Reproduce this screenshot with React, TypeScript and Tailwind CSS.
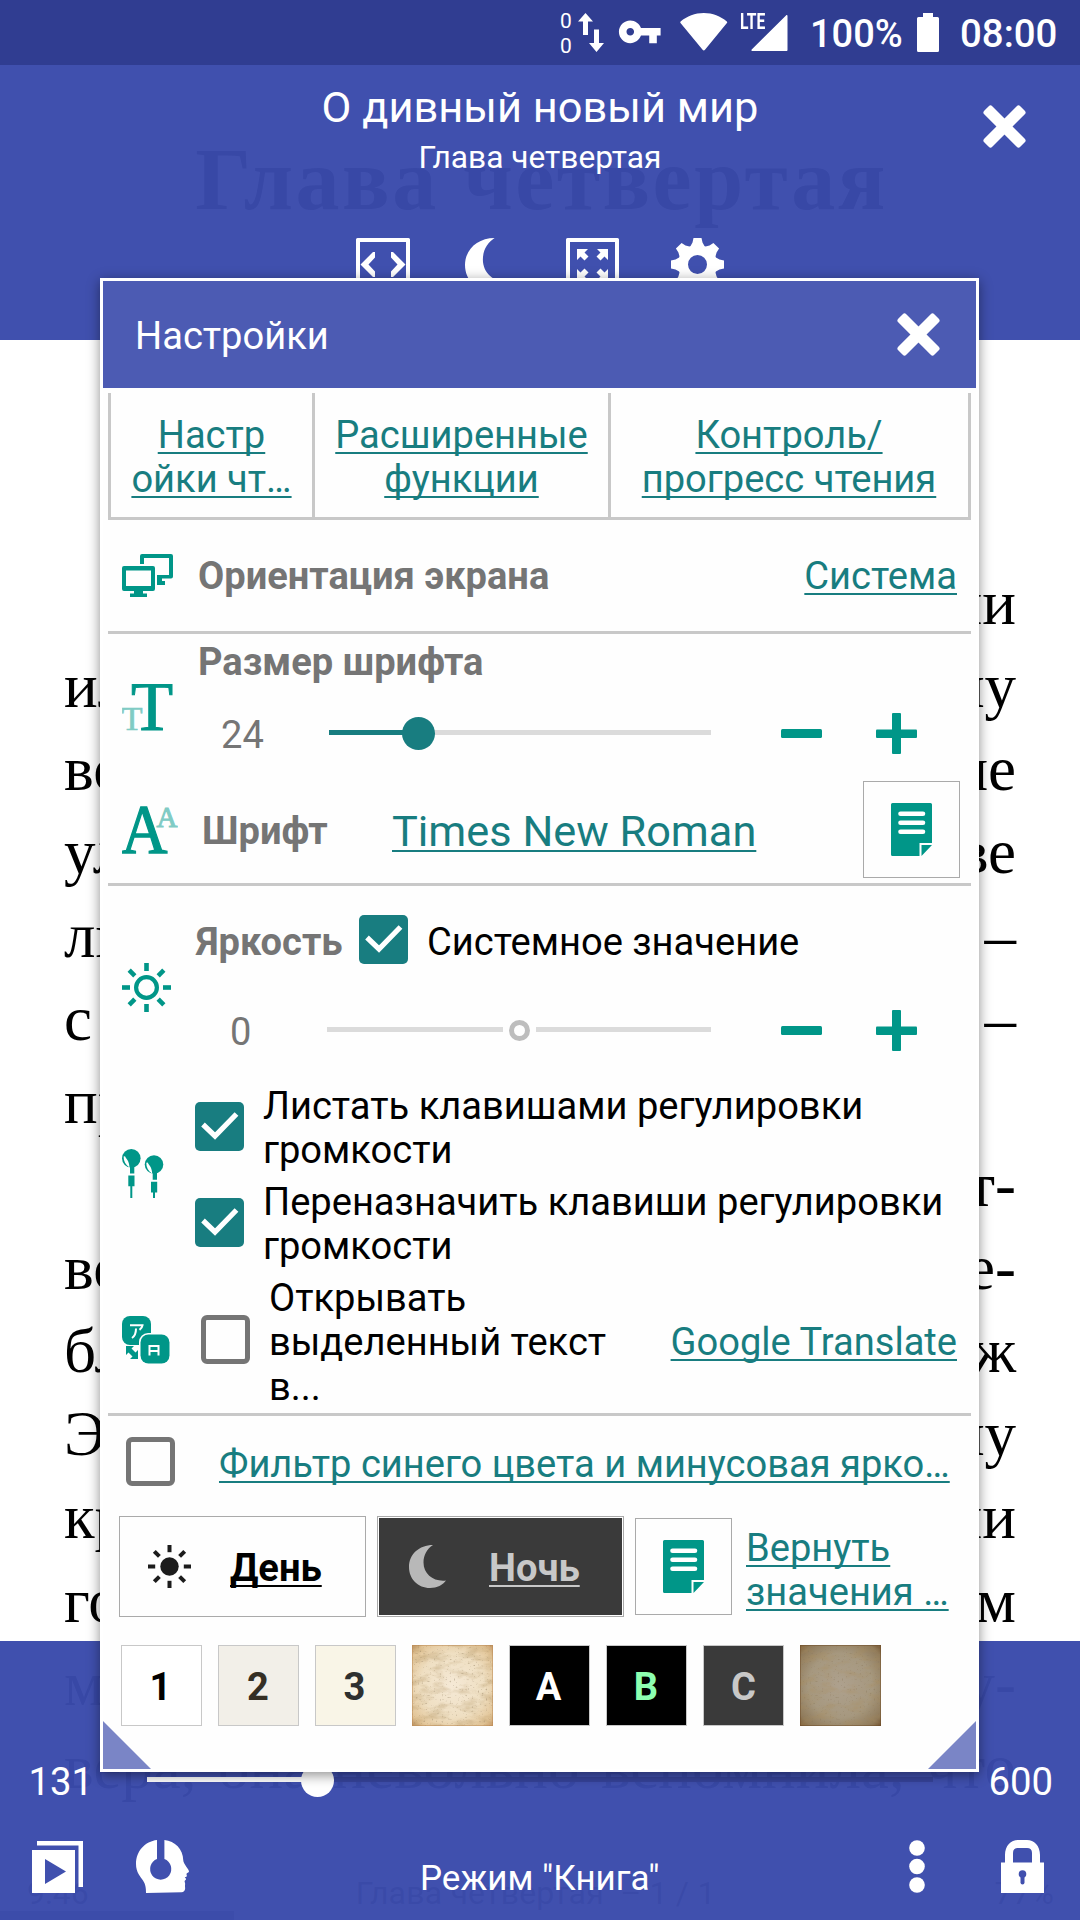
import React from "react";

const TEAL = "#009688";

function CloseIcon() {
  return (
    <svg width="43" height="43" viewBox="0 0 43 43" fill="#fff" className="shrink-0">
      <rect x="-4" y="15.8" width="51" height="11.4" rx="2.5" transform="rotate(45 21.5 21.5)" />
      <rect x="-4" y="15.8" width="51" height="11.4" rx="2.5" transform="rotate(-45 21.5 21.5)" />
    </svg>
  );
}

function MoonIcon({ size, color }: { size: number; color: string }) {
  return (
    <svg width={size} height={size} viewBox="0 0 43 43" fill={color} className="shrink-0">
      <path d="M24 0C10 0 0 9.500 0 22c0 12 9 21 21 21 7 0 13-3 16-7.500C25 37 14.500 29.500 14.500 17.500 14.500 10 18 4 24 0z" />
    </svg>
  );
}

function CodeIcon() {
  return (
    <svg width="54" height="53" viewBox="0 0 54 53" fill="#fff">
      <path fillRule="evenodd" d="M1.500 0h51a1.500 1.500 0 0 1 1.500 1.500V53H0V1.500A1.500 1.500 0 0 1 1.500 0zM4 4v45h46V4z" />
      <path d="M4.500 26.500 17 14h2v5.500l-6.500 7L19 33.500V39h-2zM49.500 26.500 37 14h-2v5.500l6.500 7-6.500 7V39h2z" />
    </svg>
  );
}

function FullscreenIcon() {
  const arrow = "M11 11h11l-3.500 3.500 4 4-4 4-4-4L11 22z";
  return (
    <svg width="53" height="53" viewBox="0 0 53 53" fill="#fff">
      <path fillRule="evenodd" d="M1.500 0h50A1.500 1.500 0 0 1 53 1.500V53H0V1.500A1.500 1.500 0 0 1 1.500 0zM4 4v45h45V4z" />
      {[0, 90, 180, 270].map((a) => (
        <path key={a} d={arrow} transform={`rotate(${a} 26.500 26.500)`} />
      ))}
    </svg>
  );
}

function GearIcon() {
  return (
    <svg width="53" height="53" viewBox="-26.500 -26.500 53 53" fill="#fff">
      <path fillRule="evenodd" d="M-19.500 0a19.500 19.500 0 1 0 39 0 19.500 19.500 0 1 0-39 0zM-9.500 0a9.500 9.500 0 1 0 19 0 9.500 9.500 0 1 0-19 0z" />
      {[0, 45, 90, 135, 180, 225, 270, 315].map((a) => (
        <path key={a} d="M-7.500-17.500-5-22l1-4.500h8L5-22l2.500 4.500z" transform={`rotate(${a})`} />
      ))}
    </svg>
  );
}

function MonitorsIcon() {
  return (
    <svg width="51" height="43" viewBox="0 0 51 43" fill={TEAL}>
      <path d="M18 10V2a2 2 0 0 1 2-2h29a2 2 0 0 1 2 2v20.500a2 2 0 0 1-2 2h-9V27h3v4h-8V21h12V4H22v6z" />
      <path fillRule="evenodd" d="M2 12h29a2 2 0 0 1 2 2v21a2 2 0 0 1-2 2H21v2.500h4V43H8v-3.500h4V37H2a2 2 0 0 1-2-2V14a2 2 0 0 1 2-2zM4 16.500v15.500h25V16.500z" />
    </svg>
  );
}

function FontSizeIcon() {
  return (
    <svg width="52" height="47" viewBox="0 0 52 47" fontFamily="Liberation Serif, serif">
      <text x="9" y="45.500" fontSize="69" fill={TEAL} stroke={TEAL} strokeWidth="1">T</text>
      <text x="-0.500" y="45.500" fontSize="34.500" fill="#80cbc4" stroke="#80cbc4" strokeWidth="0.600">T</text>
    </svg>
  );
}

function FontFaceIcon() {
  return (
    <svg width="56" height="48" viewBox="0 0 56 48" fontFamily="Liberation Serif, serif">
      <text x="-1" y="47" fontSize="69" fill={TEAL} stroke={TEAL} strokeWidth="1.300" textLength="46.500" lengthAdjust="spacingAndGlyphs">A</text>
      <text x="34.500" y="20.500" fontSize="29" fill="#80cbc4" stroke="#80cbc4" strokeWidth="1">A</text>
    </svg>
  );
}

const RAYS = [0, 45, 90, 135, 180, 225, 270, 315];

function BrightnessIcon() {
  return (
    <svg width="49" height="49" viewBox="-24.500 -24.500 49 49">
      <circle r="10.400" fill="none" stroke={TEAL} strokeWidth="4.200" />
      {RAYS.map((a) => (
        <rect key={a} x="-2.300" y="-24.500" width="4.600" height="8" fill={TEAL} transform={`rotate(${a})`} />
      ))}
    </svg>
  );
}

function DayIcon() {
  return (
    <svg width="43" height="43" viewBox="-21.500 -21.500 43 43" fill="#1c1c1c">
      <circle r="9.200" />
      {RAYS.map((a) => (
        <rect key={a} x="-2" y="-21.500" width="4" height="7.200" transform={`rotate(${a})`} />
      ))}
    </svg>
  );
}

function EarbudsIcon() {
  const bud = (
    <>
      <circle cx="9.300" cy="9.300" r="9.300" fill={TEAL} />
      <path d="M1.600 7.500 3 7.200c1.200 3 4.200 4 4.500 11.300C3.500 16 1.500 12 1.600 7.500z" fill="#fff" />
      <path d="M8 15h4.300v9.500H8zM6.300 26.500h6.200v10.800h-6.200zM8.300 37h2v12h-2z" fill={TEAL} />
    </>
  );
  return (
    <svg width="42" height="49" viewBox="0 0 42 49">
      {bud}
      <g transform="translate(22.700 6.200)">{bud}</g>
    </svg>
  );
}

function TranslateIcon() {
  return (
    <svg width="48" height="48" viewBox="0 0 48 48" fill="none">
      <rect width="29" height="29" rx="8" fill={TEAL} />
      <path d="M8 9.300h12.500c-.3 2-1.500 3.500-3 4.500M14 12.500c0 5-1 7.500-4 9.500" stroke="#fff" strokeWidth="2" />
      <rect x="17" y="17" width="33" height="33" rx="9" fill="#fefefe" />
      <rect x="18.500" y="18.500" width="29" height="29" rx="8" fill={TEAL} />
      <path d="M27.500 39.500V30h9v9.500M27.500 35h9" stroke="#fff" strokeWidth="2" />
      <path d="M4 30h8l-2.500 2.500 4 4 2.500-2.500v9H8l2.500-2.500-4-4L4 39z" fill={TEAL} />
    </svg>
  );
}

function DocIcon() {
  return (
    <svg width="41" height="53" viewBox="0 0 41 53" fill={TEAL}>
      <path d="M1.500 0h38A1.500 1.500 0 0 1 41 1.500V40H28.500v13h-27A1.500 1.500 0 0 1 0 51.500v-50A1.500 1.500 0 0 1 1.500 0zM30.500 42H41L30.500 53z" />
      <path d="M9.500 10.800h22.500M9.500 19.800h22.500M9.500 28.700h22.500" stroke="#fff" strokeWidth="4.600" strokeLinecap="round" />
    </svg>
  );
}

function MinusIcon() {
  return (
    <svg width="41" height="41" viewBox="0 0 41 41" fill={TEAL}>
      <rect y="16" width="41" height="9" rx="1.500" />
    </svg>
  );
}

function PlusIcon() {
  return (
    <svg width="41" height="41" viewBox="0 0 41 41" fill={TEAL}>
      <rect y="16.500" width="41" height="8.500" rx="1" />
      <rect x="16" width="9" height="41" rx="1" />
    </svg>
  );
}

function Checkbox({ checked }: { checked: boolean }) {
  if (!checked) return <div className="size-[49px] shrink-0 rounded-[6px] border-[5px] border-[#757575]" />;
  return (
    <div className="size-[49px] shrink-0 rounded-[5px] bg-[#187d80]">
      <svg width="49" height="49" viewBox="0 0 49 49" fill="none" stroke="#fff" strokeWidth="5.200">
        <path d="M8 22.500 20 34 41.500 12" />
      </svg>
    </div>
  );
}

function Link({ children, className = "" }: { children: React.ReactNode; className?: string }) {
  return (
    <span
      className={`whitespace-nowrap text-[#187d80] underline decoration-2 underline-offset-[4px] [text-decoration-skip-ink:none] ${className}`}
    >
      {children}
    </span>
  );
}

function Label({ children }: { children: React.ReactNode }) {
  return <span className="whitespace-nowrap font-bold text-[#757575]">{children}</span>;
}

function Divider() {
  return <div className="ml-[5px] h-[3px] w-[863px] shrink-0 bg-[#c8c8c8]" />;
}

function Parchment({ dark }: { dark?: boolean }) {
  const id = dark ? "dark" : "light";
  return (
    <svg width="81" height="81" viewBox="0 0 81 81" className="shrink-0">
      <defs>
        <radialGradient id={`g-${id}`} cx="50%" cy="50%" r="72%">
          <stop offset="0" stopColor={dark ? "#aea18e" : "#f5e9d6"} />
          <stop offset="0.550" stopColor={dark ? "#a6987f" : "#efdfc2"} />
          <stop offset="0.850" stopColor={dark ? "#8f7a5a" : "#e2c496"} />
          <stop offset="1" stopColor={dark ? "#6d4c28" : "#c2905c"} />
        </radialGradient>
        <filter id={`n-${id}`} x="0" y="0" width="100%" height="100%">
          <feTurbulence type="fractalNoise" baseFrequency="0.060 0.120" numOctaves="5" seed="11" />
          <feColorMatrix values="0 0 0 0 0.400  0 0 0 0 0.260  0 0 0 0 0.100  0.900 0 0 0 -0.400" />
        </filter>
        <filter id={`s-${id}`} x="0" y="0" width="100%" height="100%">
          <feTurbulence type="fractalNoise" baseFrequency="0.500" numOctaves="2" seed="4" />
          <feColorMatrix values="0 0 0 0 0.250  0 0 0 0 0.180  0 0 0 0 0.100  4 0 0 0 -2.600" />
        </filter>
      </defs>
      <rect width="81" height="81" fill={`url(#g-${id})`} />
      <rect width="81" height="81" filter={`url(#n-${id})`} />
      <rect width="81" height="81" filter={`url(#s-${id})`} opacity="0.600" />
      <rect x="0.500" y="0.500" width="80" height="80" fill="none" stroke={dark ? "#6d4c28" : "#b98752"} strokeOpacity="0.500" />
    </svg>
  );
}

const BOOK_LINES: [string, string][] = [
  ["", "ии"],
  ["ил", "му"],
  ["во", "ые"],
  ["ул", "зве"],
  ["ли", "–"],
  ["с", "–"],
  ["пр", ""],
  ["", "ст-"],
  ["во", "ле-"],
  ["бл", "уж"],
  ["Эт", "му"],
  ["кр", "ии"],
  ["го", "ем"],
  ["мо", "ту-"],
];

function BookPage() {
  return (
    <div className="absolute inset-0 flex flex-col bg-white text-black">
      <div className="mt-[137px] h-[83px] pl-[3px] text-center font-['Liberation_Serif',serif] text-[88px] font-bold leading-[86px] tracking-[2.500px]">
        Глава четвертая
      </div>
      <div className="mt-[342px] pr-[64px] pl-[64px] font-['Liberation_Serif',serif] text-[63px]">
        {BOOK_LINES.map(([l, r], i) => (
          <div key={i} className="flex h-[83.140px] justify-between leading-[83.140px]">
            <span>{l}</span>
            <span>{r}</span>
          </div>
        ))}
        <div className="flex h-[83.140px] justify-between leading-[83.140px]">
          {["вера,", "она", "невольно", "вспомнила,", "что"].map((w) => (
            <span key={w}>{w}</span>
          ))}
        </div>
      </div>
      <div className="mt-[66px] flex h-[36px] justify-between pr-[26px] pl-[27px] text-[32px] leading-[36px] text-[#444]">
        <span>9:46</span>
        <span className="mr-[12px] tracking-[0.200px]">Глава четвертая&nbsp; – 1 / 1</span>
        <span>77%</span>
      </div>
      <div className="mt-auto h-[10px] w-[234px] bg-[#888]" />
    </div>
  );
}

function StatusBar() {
  return (
    <div className="flex h-[65px] items-start bg-[#303d91] pl-[560px] text-[38px] font-medium text-white">
      <div className="w-[12px] pt-[9px] text-center text-[21px] font-normal leading-[25px]">
        <div>0</div>
        <div>0</div>
      </div>
      <svg className="mt-[13px] ml-[5px] shrink-0" width="28" height="40" viewBox="0 0 28 40" fill="#fff">
        <path d="M8.500 0 16 8.500h-5V22H6V8.500H1zM19.500 39 12 30h5V16.500h5V30h5z" />
      </svg>
      <svg className="mt-[9px] ml-[12px] shrink-0" width="45.500" height="45.500" viewBox="0 0 24 24" fill="#fff">
        <path d="M12.650 10C11.830 7.670 9.610 6 7 6c-3.310 0-6 2.690-6 6s2.690 6 6 6c2.610 0 4.830-1.670 5.650-4H17v4h4v-4h2v-4H12.650zM7 14c-1.100 0-2-.900-2-2s.900-2 2-2 2 .900 2 2-.900 2-2 2z" />
      </svg>
      <svg className="mt-[13px] ml-[17.500px] shrink-0" width="48" height="38" viewBox="0 0 48 38" fill="#fff">
        <path d="M.600 8.600C7 3 15 0 23.800 0s16.800 3 23 8.600c.6.500.5 1 .1 1.500L25 36.800c-.8.900-1.600.9-2.400 0L.500 10.100c-.4-.5-.4-1 .1-1.500z" />
      </svg>
      <div className="relative mt-[13px] ml-[12px] h-[40px] w-[48px] shrink-0">
        <svg width="48" height="40" viewBox="0 0 48 40" fill="#fff">
          <path d="M46 2.500c.8-.8 1.500-.5 1.500.6V37c0 .7-.5 1-1 1H12.500c-1.200 0-1.500-.8-.8-1.500z" />
        </svg>
        <span className="absolute top-0 left-0 origin-left scale-x-[0.710] text-[22px] font-bold leading-[18px]">LTE</span>
      </div>
      <span className="ml-[22px] w-[94px] leading-[68px]">100%</span>
      <svg className="mt-[13px] ml-[13px] shrink-0" width="22" height="39" viewBox="0 0 22 39" fill="#fff">
        <path d="M6 0h10v4h4.500A1.500 1.500 0 0 1 22 5.500v32a1.500 1.500 0 0 1-1.500 1.500h-19A1.500 1.500 0 0 1 0 37.500v-32A1.500 1.500 0 0 1 1.500 4H6z" />
      </svg>
      <span className="ml-[21px] text-[38.400px] leading-[68px]">08:00</span>
    </div>
  );
}

function ReaderHeader() {
  return (
    <div className="flex h-[275px] flex-col bg-[rgba(58,74,171,0.970)] text-white">
      <div className="flex h-[115px]">
        <div className="w-[140px]" />
        <div className="flex-1 pt-[18px] text-center">
          <div className="text-[43.400px] leading-[50px]">О дивный новый мир</div>
          <div className="mt-[6px] text-[31.700px] leading-[38px]">Глава четвертая</div>
        </div>
        <div className="w-[140px] pt-[40px] pl-[43px]">
          <CloseIcon />
        </div>
      </div>
      <div className="mt-[58px] flex h-[53px] pl-[355.500px]">
        <CodeIcon />
        <div className="ml-[55.500px]">
          <MoonIcon size={53} color="#fff" />
        </div>
        <div className="ml-[48px]">
          <FullscreenIcon />
        </div>
        <div className="ml-[52px]">
          <GearIcon />
        </div>
      </div>
    </div>
  );
}

function ReaderFooter() {
  return (
    <div className="mt-auto h-[279px] bg-[rgba(58,74,171,0.970)] pt-[115px] text-white">
      <div className="flex h-[46px] items-center text-[38.300px]">
        <span className="mt-[5px] w-[147px] pl-[28.500px] leading-[46px]">131</span>
        <div className="relative h-[5px] w-[786px] bg-[#36439a]">
          <div className="h-full w-[170px] bg-white" />
          <div className="absolute -top-[13px] left-[154px] size-[33px] rounded-full bg-white" />
        </div>
        <span className="mt-[5px] ml-[55.500px] leading-[46px]">600</span>
      </div>
      <div className="mt-[38px] flex h-[53px] pl-[32px]">
        <svg width="51" height="53" viewBox="0 0 51 53" fill="#fff" className="mt-[1px] shrink-0">
          <path d="M5 0h46v46h-4.500V4.500H5z" />
          <path fillRule="evenodd" d="M0 9h43v43H0zM13 18v25l21-12.500z" />
        </svg>
        <svg width="54" height="53" viewBox="0 0 54 53" fill="#fff" className="ml-[53px] shrink-0">
          <path d="M21 0v19.100a10.600 10.600 0 1 0 7.400 0V0C39 1 47 9 47.300 20.500c0 3 5.700 9 5.700 11 0 1.200-2.500 1.500-2.500 2.500 0 .9.600 1.600.3 2.300-.3.700-2 .7-2 1.200s1.500.8 1.300 1.700-1.500 1-1.500 2 .8 1.600.5 3.300.2 3 0 4.500c-.3 2-1.500 3-3.500 3.200L10 53c0-5.500-.5-8.500-3-12.500S0 32.500 0 24C0 11 9 1.500 21 0z" />
        </svg>
        <span className="mt-[16px] ml-[230px] w-[250px] shrink-0 text-[35px] leading-[46px] whitespace-nowrap">Режим "Книга"</span>
        <svg width="16" height="53" viewBox="0 0 16 53" fill="#fff" className="ml-[239px] shrink-0">
          <circle cx="8" cy="8" r="7.800" />
          <circle cx="8" cy="26.500" r="7.800" />
          <circle cx="8" cy="45" r="7.800" />
        </svg>
        <svg width="43" height="53" viewBox="0 0 43 53" className="ml-[76px] shrink-0">
          <path fill="#fff" fillRule="evenodd" d="M4 22.500V15C4 5.500 10 0 17 0h9c7 0 13 5.500 13 15v7.500h4V53H0V22.500zM12 22.500h19V13c0-3.300-1.700-5-5-5h-9c-3.300 0-5 1.700-5 5z" />
          <circle cx="21.500" cy="34" r="3.800" fill="#404fae" />
          <path d="M21.500 34v8.500" stroke="#404fae" strokeWidth="4" strokeLinecap="round" />
        </svg>
      </div>
    </div>
  );
}

function Tabs() {
  const cell = "border-[#c8c8c8] pt-[20px] text-center leading-[44.300px]";
  return (
    <div className="mt-[5px] ml-[5px] flex h-[127px] w-[863px] shrink-0 border-b-[3px] border-[#c8c8c8]">
      <div className={`${cell} w-[204px] border-l-[3px]`}>
        <Link>Настр</Link>
        <br />
        <Link>ойки чт…</Link>
      </div>
      <div className={`${cell} w-[296px] border-l-[3px]`}>
        <Link>Расширенные</Link>
        <br />
        <Link>функции</Link>
      </div>
      <div className={`${cell} w-[363px] border-x-[3px] pr-[1px]`}>
        <Link>Контроль/</Link>
        <br />
        <Link>прогресс чтения</Link>
      </div>
    </div>
  );
}

function IconCell({ children }: { children: React.ReactNode }) {
  return <div className="flex w-[93px] shrink-0 items-center pl-[19px]">{children}</div>;
}

function SettingsDialog() {
  return (
    <div className="absolute top-[278px] left-[100px] flex h-[1494px] w-[879px] flex-col border-[3px] border-white bg-[#fefefe] text-[38.100px] leading-[44.300px] text-black shadow-[0_3px_12px_rgba(0,0,0,0.450)]">
      <div className="flex h-[107px] shrink-0 items-center justify-between bg-[#4c5bb3] pr-[36px] pl-[32px] text-white">
        <span className="mt-[4px]">Настройки</span>
        <CloseIcon />
      </div>
      <Tabs />

      <div className="flex h-[111px] shrink-0 items-center pr-[19px]">
        <IconCell>
          <MonitorsIcon />
        </IconCell>
        <div className="mt-[2px] flex flex-1 justify-between pl-[2px]">
          <Label>Ориентация экрана</Label>
          <Link>Система</Link>
        </div>
      </div>
      <Divider />

      <div className="flex h-[147px] shrink-0">
        <IconCell>
          <FontSizeIcon />
        </IconCell>
        <div className="pt-[6px]">
          <div className="h-[44px] pl-[2px]">
            <Label>Размер шрифта</Label>
          </div>
          <div className="flex h-[97px] items-center">
            <span className="mt-[6px] w-[133px] pl-[25px] text-[#757575]">24</span>
            <div className="relative h-[5px] w-[382px] bg-[#dbdbdb]">
              <div className="h-full w-[89px] bg-[#187d80]" />
              <div className="absolute -top-[13px] left-[73px] size-[33px] rounded-full bg-[#187d80]" />
            </div>
            <div className="mt-[2px] ml-[70px]">
              <MinusIcon />
            </div>
            <div className="mt-[2px] ml-[54px]">
              <PlusIcon />
            </div>
          </div>
        </div>
      </div>

      <div className="flex h-[97px] shrink-0">
        <IconCell>
          <FontFaceIcon />
        </IconCell>
        <div className="flex items-center pt-[4px] pl-[6px]">
          <div className="w-[190px]">
            <Label>Шрифт</Label>
          </div>
          <Link className="w-[471px] text-[43.300px] leading-[50px]">Times New Roman</Link>
        </div>
        <div className="flex size-[97px] items-center justify-center border border-[#aaa] pb-[1px]">
          <DocIcon />
        </div>
      </div>
      <div className="h-[5px] shrink-0" />
      <Divider />

      <div className="flex h-[198px] shrink-0">
        <IconCell>
          <div className="mt-[5px]">
            <BrightnessIcon />
          </div>
        </IconCell>
        <div>
          <div className="mt-[29px] flex h-[49px] items-center">
            <div className="mt-[6px] w-[163px]">
              <Label>Яркость</Label>
            </div>
            <Checkbox checked />
            <span className="mt-[6px] ml-[19px] whitespace-nowrap">Системное значение</span>
          </div>
          <div className="mt-[22px] flex h-[88px] items-center">
            <span className="mt-[4px] w-[131px] pl-[34px] text-[#757575]">0</span>
            <div className="flex h-[21px] w-[384px] items-center justify-between">
              <div className="mb-[1px] h-[5px] w-[176px] bg-[#dbdbdb]" />
              <div className="size-[21px] rounded-full border-[5px] border-[#bdbdbd]" />
              <div className="mb-[1px] h-[5px] w-[175px] bg-[#dbdbdb]" />
            </div>
            <div className="ml-[70px]">
              <MinusIcon />
            </div>
            <div className="ml-[54px]">
              <PlusIcon />
            </div>
          </div>
        </div>
      </div>

      <div className="flex h-[192px] shrink-0">
        <div className="w-[92.400px] shrink-0 pt-[65px] pl-[19px]">
          <EarbudsIcon />
        </div>
        <div className="flex flex-col gap-[7.400px] whitespace-nowrap">
          <div className="flex h-[88.600px] items-center">
            <div className="mb-[4px]">
              <Checkbox checked />
            </div>
            <span className="ml-[18.600px]">
              Листать клавишами регулировки
              <br />
              громкости
            </span>
          </div>
          <div className="flex h-[88.600px] items-center">
            <div className="mb-[4px]">
              <Checkbox checked />
            </div>
            <span className="ml-[18.600px]">
              Переназначить клавиши регулировки
              <br />
              громкости
            </span>
          </div>
        </div>
      </div>

      <div className="flex h-[137px] shrink-0 items-start pr-[19px]">
        <div className="w-[98.400px] shrink-0 pt-[40px] pl-[19px]">
          <TranslateIcon />
        </div>
        <div className="pt-[39px]">
          <Checkbox checked={false} />
        </div>
        <span className="ml-[18.600px] whitespace-nowrap">
          Открывать
          <br />
          выделенный текст
          <br />
          в...
        </span>
        <Link className="mt-[44.300px] ml-auto">Google Translate</Link>
      </div>
      <Divider />

      <div className="flex h-[100px] shrink-0 items-start pt-[21px] pl-[23.400px]">
        <Checkbox checked={false} />
        <Link className="mt-[5px] ml-[43.600px]">Фильтр синего цвета и минусовая ярко…</Link>
      </div>

      <div className="flex h-[101px] shrink-0 pl-[16px]">
        <div className="flex w-[247px] items-center border border-[#aaa] pl-[28px]">
          <DayIcon />
          <span className="mt-[4px] ml-[39px] font-bold underline decoration-2 underline-offset-[4px] [text-decoration-skip-ink:none]">День</span>
        </div>
        <div className="ml-[11px] w-[247px] border border-[#aaa] p-[1px]">
          <div className="flex h-full items-center bg-[#3a3a3a] pl-[30px]">
            <MoonIcon size={43} color="#b8b8b8" />
            <span className="mt-[4px] ml-[37px] font-bold text-[#c8c8c8] underline decoration-2 underline-offset-[4px] [text-decoration-skip-ink:none]">
              Ночь
            </span>
          </div>
        </div>
        <div className="mt-[2px] ml-[11px] flex size-[97px] items-center justify-center border border-[#aaa]">
          <DocIcon />
        </div>
        <div className="mt-[10px] ml-[14px] whitespace-nowrap">
          <Link>Вернуть</Link>
          <br />
          <Link>значения …</Link>
        </div>
      </div>

      <div className="mt-[28px] flex h-[81px] shrink-0 gap-[16px] pl-[18px] text-center font-bold leading-[82px]">
        <div className="w-[81px] border border-[#c8c8c8] bg-white pr-[2px] text-black">1</div>
        <div className="w-[81px] border border-[#c8c8c8] bg-[#f2efe8] pr-[1px] text-[#352f24]">2</div>
        <div className="w-[81px] border border-[#c8c8c8] bg-[#f9f5e7] pr-[2px] text-[#2e3030]">3</div>
        <Parchment />
        <div className="w-[81px] border border-[#c8c8c8] bg-black pr-[2px] text-white">A</div>
        <div className="w-[81px] border border-[#c8c8c8] bg-black pr-[1px] text-[#8dffb0]">B</div>
        <div className="w-[81px] border border-[#c8c8c8] bg-[#3a3a3a] text-[#c8c8c8]">C</div>
        <Parchment dark />
      </div>

      <div className="absolute inset-x-0 bottom-0 flex justify-between">
        <svg width="48" height="48" viewBox="0 0 48 48">
          <path d="M0 0v48h48z" fill="#7a85c6" />
        </svg>
        <svg width="48" height="48" viewBox="0 0 48 48">
          <path d="M48 0v48H0z" fill="#7a85c6" />
        </svg>
      </div>
    </div>
  );
}

export default function App() {
  return (
    <div className="relative h-[1920px] w-[1080px] overflow-hidden bg-white font-[Roboto,sans-serif]">
      <BookPage />
      <div className="relative flex h-full flex-col">
        <StatusBar />
        <ReaderHeader />
        <ReaderFooter />
      </div>
      <SettingsDialog />
    </div>
  );
}
